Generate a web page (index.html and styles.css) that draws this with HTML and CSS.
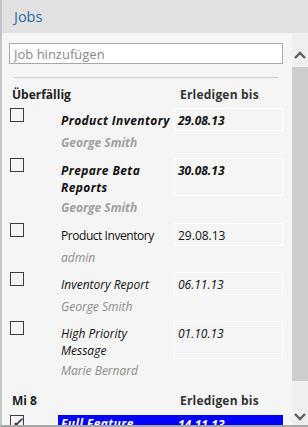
FILE: index.html
```html
<!DOCTYPE html>
<html lang="de">
<head>
    <meta charset="UTF-8">
    <meta name="viewport" content="width=device-width, initial-scale=1.0">
    <title>Jobs</title>
    <link rel="stylesheet" href="styles.css">
</head>
<body>
    <div class="panel">
        <div class="panel-header">Jobs</div>

        <div class="panel-body">
            <div class="job-list">
                <input type="text" class="job-input" placeholder="Job hinzufügen">
                <div class="separator"></div>

                <!-- Überfällige Jobs -->
                <div class="group-header">
                    <span class="group-title">Überfällig</span>
                    <span class="group-due">Erledigen bis</span>
                </div>

                <div class="job overdue">
                    <span class="check"></span>
                    <div class="job-title">Product Inventory</div>
                    <div class="job-date">29.08.13</div>
                    <div class="job-owner">George Smith</div>
                </div>

                <div class="job overdue">
                    <span class="check"></span>
                    <div class="job-title">Prepare Beta Reports</div>
                    <div class="job-date">30.08.13</div>
                    <div class="job-owner">George Smith</div>
                </div>

                <div class="job plain">
                    <span class="check"></span>
                    <div class="job-title">Product Inventory</div>
                    <div class="job-date">29.08.13</div>
                    <div class="job-owner">admin</div>
                </div>

                <div class="job italic">
                    <span class="check"></span>
                    <div class="job-title">Inventory Report</div>
                    <div class="job-date">06.11.13</div>
                    <div class="job-owner">George Smith</div>
                </div>

                <div class="job italic">
                    <span class="check"></span>
                    <div class="job-title">High Priority Message</div>
                    <div class="job-date">01.10.13</div>
                    <div class="job-owner">Marie Bernard</div>
                </div>

                <!-- Mittwoch -->
                <div class="group-header next">
                    <span class="group-title">Mi 8</span>
                    <span class="group-due">Erledigen bis</span>
                </div>

                <div class="job overdue selected">
                    <span class="check checked">&#10003;</span>
                    <div class="job-title">Full Feature</div>
                    <div class="job-date">14.11.13</div>
                </div>
            </div>

            <div class="scrollbar">
                <div class="scroll-btn">
                    <svg width="12" height="8" viewBox="0 0 12 8"><polyline points="1,7 6,2 11,7" fill="none" stroke="#5f5f5f" stroke-width="2.4"/></svg>
                </div>
                <div class="scroll-track">
                    <div class="scroll-thumb"></div>
                </div>
                <div class="scroll-btn">
                    <svg width="12" height="8" viewBox="0 0 12 8"><polyline points="1,1 6,6 11,1" fill="none" stroke="#5f5f5f" stroke-width="2.4"/></svg>
                </div>
            </div>
        </div>
    </div>
</body>
</html>
```

FILE: styles.css
```css
body {
    margin: 0;
    padding: 0;
    font-family: "Open Sans", "Noto Sans", Arial, sans-serif;
    font-size: 12px;
    background-color: #f5f5f5;
}
.panel {
    width: 308px;
    height: 427px;
    box-sizing: border-box;
    border-left: 2px solid #c4c4c4;
    border-bottom: 2px solid #a6a6a6;
    display: flex;
    flex-direction: column;
    overflow: hidden;
}
.panel-header {
    height: 33px;
    flex-shrink: 0;
    background-color: #e1e1e1;
    color: #2e6ca4;
    font-size: 14.5px;
    line-height: 33px;
    padding-left: 12px;
}
.panel-body {
    flex: 1;
    display: flex;
    min-height: 0;
    background-color: #f5f5f5;
}
.job-list {
    flex: 1;
    padding: 10px 9px 0 7px;
    overflow: hidden;
}
.job-input {
    display: block;
    width: 274px;
    height: 21px;
    box-sizing: border-box;
    margin: 0;
    padding: 0 4px;
    border: 1px solid #a9a9a9;
    background: #fff;
    font-family: inherit;
    font-size: 13px;
    color: #333;
}
.job-input::placeholder {
    color: #8a8a8a;
}
.separator {
    height: 1px;
    margin: 13px 5px 0 5px;
    background-color: #cbcbcb;
}
.group-header {
    display: grid;
    grid-template-columns: 165px 109px;
    height: 17px;
    line-height: 17px;
    margin-top: 8px;
    margin-bottom: 5px;
    font-weight: bold;
    color: #1e1e1e;
}
.group-title {
    padding-left: 3px;
}
.group-due {
    padding-left: 6px;
    letter-spacing: 0.2px;
    color: #333;
}
.group-header.next {
    margin-top: 7px;
    margin-bottom: 6px;
}
.job {
    display: grid;
    grid-template-columns: 52px 113px 109px;
    grid-template-rows: auto auto;
    line-height: 17px;
    padding-bottom: 6px;
    color: #111;
}
.check {
    grid-row: 1 / 3;
    width: 14px;
    height: 14px;
    margin-left: 1px;
    box-sizing: border-box;
    border: 1px solid #3c3c3c;
    font-size: 13px;
    line-height: 12px;
    text-align: center;
    color: #333;
}
.job-title {
    padding: 4px 4px 0 0;
}
.job-date {
    border: 1px solid #fff;
    padding: 3px 3px 1px 3px;
}
.job-owner {
    grid-column: 2 / 4;
    margin-top: 3px;
    font-style: italic;
    color: #8c8c8c;
}
.overdue {
    font-weight: bold;
    font-style: italic;
    padding-bottom: 7px;
}
.overdue .job-title {
    letter-spacing: 0.4px;
}
.overdue .job-owner {
    color: #a0a0a0;
}
.plain .job-title {
    letter-spacing: -0.45px;
}
.italic .job-title,
.italic .job-date {
    font-style: italic;
}
.selected .job-title,
.selected .job-date {
    background-color: #0000ff;
    color: #fff;
    padding-top: 0;
}
.selected .job-title {
    margin-left: -3px;
    padding-left: 3px;
}
.selected .job-date {
    border-color: #0000ff;
}
.scrollbar {
    width: 16px;
    flex-shrink: 0;
    display: flex;
    flex-direction: column;
    padding-top: 13px;
    background-color: #efefef;
}
.scroll-btn {
    height: 17px;
    display: flex;
    align-items: center;
    justify-content: center;
}
.scroll-track {
    flex: 1;
    padding-top: 4px;
}
.scroll-thumb {
    height: 314px;
    background-color: #cdcdcd;
}
```
